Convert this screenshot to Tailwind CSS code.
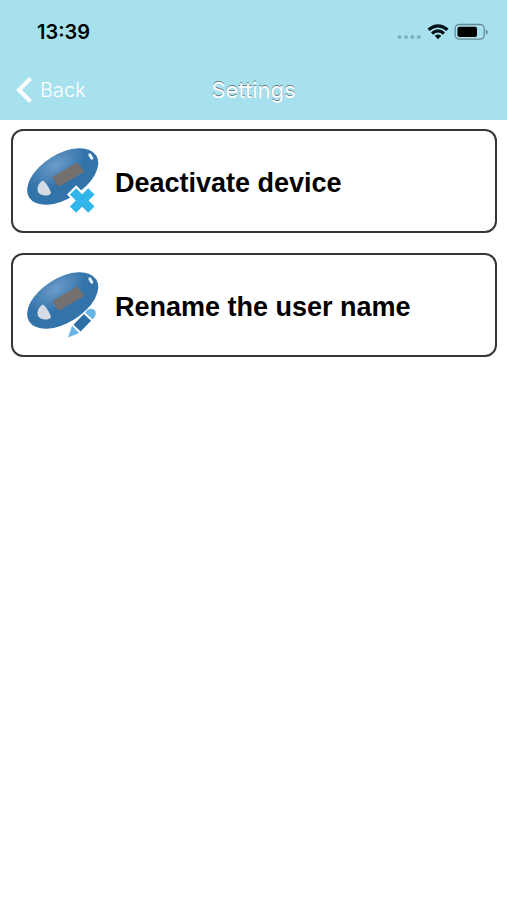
<!DOCTYPE html>
<html lang="en">
<head>
<meta charset="utf-8">
<meta name="viewport" content="width=device-width, initial-scale=1">
<title>Settings</title>
<script src="https://cdn.jsdelivr.net/npm/@tailwindcss/browser@4"></script>
</head>
<body class="min-h-screen bg-white font-['Liberation_Sans',Arial,sans-serif] text-black">
<svg class="absolute size-0" aria-hidden="true">
  <defs>
    <radialGradient id="shell" cx="0.5" cy="0.2" r="0.42">
      <stop offset="0" stop-color="#6c9dca"/>
      <stop offset="1" stop-color="#3273aa"/>
    </radialGradient>
    <symbol id="device" viewBox="0 0 76 76">
      <ellipse cx="37.7" cy="33.5" rx="39.6" ry="22.2" transform="rotate(-32 37.7 33.5)" fill="url(#shell)"/>
      <path d="M28 33.5 51.5 19.8Q52.6 19.3 53.3 20.3L58.8 28Q59.2 29 58.3 29.6L34.5 43.2Q33.3 43.7 32.6 42.6L27.6 34.9Q27.2 34 28 33.5Z" fill="#74706f"/>
      <path d="M18 37.5C21 39.8 24.5 45 25.8 49.5Q26.1 51.3 24 52C20 53.3 15.5 52.6 13.3 49.3C11 45.5 13.6 40 18 37.5Z" fill="#d6dce3"/>
      <path d="M64.8 11.8 66.8 15.2" stroke="#e8f6ff" stroke-width="3" stroke-linecap="round"/>
    </symbol>
  </defs>
</svg>
<header class="bg-[#a7e1ee]">
  <div class="flex h-[60px] items-center justify-between pt-1 pr-[18px] pl-[37px]">
    <time class="font-[Inter,sans-serif] text-[20px] font-semibold">13:39</time>
    <svg class="h-6 w-[92px]" viewBox="0 0 92 24" role="img" aria-label="Signal, Wi-Fi and battery">
      <g fill="#83b0bc"><circle cx="2.6" cy="17" r="2"/><circle cx="9" cy="17" r="2"/><circle cx="15.4" cy="17" r="2"/><circle cx="21.8" cy="17" r="2"/></g>
      <g fill="none" stroke="#06151a" stroke-width="3.2">
        <path d="M31.5 9.8Q41 1.8 50.5 9.8"/>
        <path d="M35 13.5Q41 8.4 47 13.5"/>
      </g>
      <path d="M37.7 15.8Q41 13 44.3 15.8L41 19.2Z" fill="#06151a"/>
      <rect x="58.2" y="4.5" width="29" height="14.6" rx="4" fill="none" stroke="#658b95" stroke-width="1.3"/>
      <rect x="60.5" y="6.7" width="19.5" height="10.2" rx="2" fill="#000"/>
      <path d="M88.8 9.5Q90.9 10.3 90.9 12T88.8 14.5Z" fill="#658b95"/>
    </svg>
  </div>
  <nav class="grid h-[60px] grid-cols-[1fr_auto_1fr] items-center px-4 font-[Inter,sans-serif] text-white">
    <button type="button" class="flex items-center gap-2 justify-self-start text-[20px] font-light">
      <svg class="h-7 w-4" viewBox="0 0 16 28" fill="none" stroke="currentColor" stroke-width="4" aria-hidden="true"><path d="M14.5 2.5 3 14 14.5 25.5"/></svg>
      Back
    </button>
    <h1 class="text-[22px] font-normal [text-shadow:0_-1px_0_#687f87]">Settings</h1>
  </nav>
</header>
<main class="flex flex-col gap-5 py-[9px] pr-[10px] pl-[11px]">
  <button type="button" class="flex h-[104px] w-full items-center gap-3.5 rounded-xl border-2 border-[#363636] px-3 text-left text-[27px] font-bold">
    <svg class="size-[76px] shrink-0" viewBox="0 0 76 76" aria-hidden="true">
      <use href="#device"/>
      <g transform="translate(57.2 57.5) rotate(45)">
        <path d="M-4.5-13H4.5V-4.5H13V4.5H4.5V13H-4.5V4.5H-13V-4.5H-4.5Z" fill="#31b5eb" stroke="#fff" stroke-width="4" paint-order="stroke"/>
      </g>
    </svg>
    <span class="pt-1">Deactivate device</span>
  </button>
  <button type="button" class="flex h-[104px] w-full items-center gap-3.5 rounded-xl border-2 border-[#363636] px-3 text-left text-[27px] font-bold">
    <svg class="size-[76px] shrink-0" viewBox="0 0 76 76" aria-hidden="true">
      <use href="#device"/>
      <g transform="translate(43 70.5) rotate(-46)" stroke="#fff" stroke-width="2" paint-order="stroke">
        <path d="M0 0 11-5V5Z" fill="#68b4e5"/>
        <path d="M13-5H28V5H13Z" fill="#2d70a8"/>
        <path d="M30-5H33Q38-4 38 0T33 5H30Z" fill="#68b4e5"/>
      </g>
    </svg>
    <span class="pt-1">Rename the user name</span>
  </button>
</main>
</body>
</html>
